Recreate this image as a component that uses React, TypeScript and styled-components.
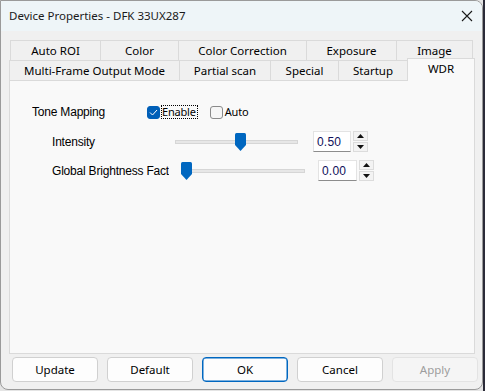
import React from "react";
import styled, { createGlobalStyle } from "styled-components";

const GlobalStyle = createGlobalStyle`
  html, body { margin: 0; padding: 0; }
  body {
    width: 485px; height: 391px; overflow: hidden;
    background: linear-gradient(to right, #e4e4e4 483px, #2b2b38 483px);
  }
`;

const UI = `"Noto Sans", "Open Sans", sans-serif`;
const GOTHIC = `"Liberation Sans", Arial, sans-serif`;

const Window = styled.div`
  box-sizing: border-box;
  width: 483px;
  height: 390px;
  border: 1px solid #9a9a9a;
  border-radius: 0 8px 8px 8px;
  background: #f0f0f0;
  overflow: hidden;
  display: flex;
  flex-direction: column;
  font-family: ${UI};
  font-size: 11px;
  color: #000;
`;

const TitleBar = styled.div`
  height: 30px;
  flex: none;
  background: #eef5f8;
  display: flex;
  align-items: center;
  justify-content: space-between;
  padding: 0 8px 0 8px;
`;

const Title = styled.span`
  font-size: 11.5px;
  color: #1a1a1a;
  padding-bottom: 2px;
`;

const Close = styled.div`
  width: 12px;
  height: 12px;
  display: flex;
  margin-right: 1px;
  margin-bottom: 1px;
`;

const Body = styled.div`
  flex: 1;
  display: flex;
  flex-direction: column;
  padding: 9px 0 0 8px;
`;

const TabRow = styled.div<{ $inset: number }>`
  display: flex;
  height: 20px;
  padding-left: ${(p) => p.$inset}px;
`;

const Tab = styled.div<{ $w: number; $active?: boolean }>`
  box-sizing: border-box;
  flex: none;
  width: ${(p) => p.$w}px;
  height: ${(p) => (p.$active ? 23 : 20)}px;
  margin-top: ${(p) => (p.$active ? -2 : 0)}px;
  margin-right: -1px;
  border: 1px solid #dadada;
  border-bottom: none;
  background: ${(p) => (p.$active ? "#f9f9f9" : "#f0f0f0")};
  position: relative;
  z-index: ${(p) => (p.$active ? 2 : 1)};
  display: flex;
  align-items: center;
  justify-content: center;
  padding-bottom: ${(p) => (p.$active ? 4 : 1)}px;
  font-size: 11.5px;
  white-space: nowrap;
`;

const Panel = styled.div`
  box-sizing: border-box;
  flex: none;
  width: 466px;
  height: 274px;
  border: 1px solid #dadada;
  background: #f9f9f9;
  display: flex;
  flex-direction: column;
  font-family: ${GOTHIC};
  font-size: 12px;
`;

const Row = styled.div<{ $top: number; $indent: number; $h: number }>`
  display: flex;
  align-items: center;
  height: ${(p) => p.$h}px;
  margin-top: ${(p) => p.$top}px;
  padding-left: ${(p) => p.$indent}px;
`;

const Label = styled.div<{ $w: number; $gap?: number }>`
  width: ${(p) => p.$w}px;
  margin-right: ${(p) => p.$gap ?? 0}px;
  flex: none;
  white-space: nowrap;
  overflow: hidden;
  letter-spacing: -0.2px;
`;

const Check = styled.div<{ $on?: boolean }>`
  box-sizing: border-box;
  width: 13px;
  height: 13px;
  border-radius: 3px;
  flex: none;
  background: ${(p) => (p.$on ? "#005fb8" : "#f6f6f6")};
  border: 1px solid ${(p) => (p.$on ? "#005fb8" : "#8a8a8a")};
  display: flex;
  align-items: center;
  justify-content: center;
`;

const CheckText = styled.span<{ $focus?: boolean }>`
  font-family: ${UI};
  font-size: 11px;
  letter-spacing: -0.2px;
  margin-left: 2px;
  padding: 0 1px 0 0;
  line-height: 12px;
  outline: ${(p) => (p.$focus ? "1px dotted #000" : "none")};
  outline-offset: 0px;
  margin-right: ${(p) => (p.$focus ? 13 : 0)}px;
`;

const Slider = styled.div<{ $w: number }>`
  position: relative;
  width: ${(p) => p.$w}px;
  height: 18px;
  flex: none;
  display: flex;
  align-items: center;
`;

const Track = styled.div`
  box-sizing: border-box;
  width: 100%;
  height: 4px;
  background: #e7e7e7;
  border: 1px solid #d6d6d6;
`;

const Thumb = styled.svg`
  position: absolute;
  top: 0;
`;

const Edit = styled.div<{ $w: number; $gap: number }>`
  box-sizing: border-box;
  flex: none;
  width: ${(p) => p.$w}px;
  height: 21px;
  margin-left: ${(p) => p.$gap}px;
  background: #fff;
  border: 1px solid #e3e3e3;
  border-bottom: 1px solid #8c8c8c;
  display: flex;
  align-items: center;
  padding-left: 3px;
  color: #10105a;
  font-size: 12px;
  letter-spacing: 0.2px;
`;

const Spin = styled.div`
  flex: none;
  width: 15px;
  height: 21px;
  margin-left: 2px;
  display: flex;
  flex-direction: column;
  gap: 1px;
`;

const SpinBtn = styled.div`
  box-sizing: border-box;
  flex: 1;
  background: #f3f3f3;
  border: 1px solid #dcdcdc;
  display: flex;
  align-items: center;
  justify-content: center;
`;

const ButtonBar = styled.div`
  display: flex;
  gap: 9px;
  padding-left: 3px;
  margin-top: 3px;
`;

const Button = styled.div<{ $variant?: "default" | "disabled" }>`
  box-sizing: border-box;
  flex: none;
  width: 86px;
  height: 25px;
  border-radius: 4px;
  display: flex;
  align-items: center;
  justify-content: center;
  font-size: 11.5px;
  padding-bottom: 1px;
  background: ${(p) => (p.$variant === "disabled" ? "#f5f5f5" : "#fdfdfd")};
  border: 1px solid
    ${(p) =>
      p.$variant === "default" ? "#0067c0" : p.$variant === "disabled" ? "#e3e3e3" : "#d0d0d0"};
  box-shadow: ${(p) => (p.$variant === "default" ? "inset 0 0 0 0.5px #0067c0" : "none")};
  color: ${(p) => (p.$variant === "disabled" ? "#9d9d9d" : "#000")};
`;

const ThumbShape = ({ left }: { left: number }) => (
  <Thumb width="11" height="18" viewBox="0 0 11 18" style={{ left }}>
    <path d="M1.5 0 H9.5 Q11 0 11 1.5 V12 L5.5 18 L0 12 V1.5 Q0 0 1.5 0 Z" fill="#0067c0" />
  </Thumb>
);

const Arrow = ({ up }: { up?: boolean }) => (
  <svg width="7" height="4" viewBox="0 0 7 4">
    <path d={up ? "M0 4 L3.5 0 L7 4 Z" : "M0 0 L7 0 L3.5 4 Z"} fill="#111" />
  </svg>
);

const row1 = [
  ["Auto ROI", 91],
  ["Color", 79],
  ["Color Correction", 129],
  ["Exposure", 91],
  ["Image", 77],
] as const;

const row2 = [
  ["Multi-Frame Output Mode", 171],
  ["Partial scan", 92],
  ["Special", 69],
  ["Startup", 70],
  ["WDR", 68],
] as const;

export default function App() {
  return (
    <>
      <GlobalStyle />
      <Window>
        <TitleBar>
          <Title>Device Properties - DFK 33UX287</Title>
          <Close>
            <svg width="12" height="12" viewBox="0 0 12 12">
              <path d="M1 1 L11 11 M11 1 L1 11" stroke="#1a1a1a" strokeWidth="1.1" />
            </svg>
          </Close>
        </TitleBar>
        <Body>
          <TabRow $inset={1}>
            {row1.map(([t, w]) => (
              <Tab key={t} $w={w}>
                {t}
              </Tab>
            ))}
          </TabRow>
          <TabRow $inset={0}>
            {row2.map(([t, w]) => (
              <Tab key={t} $w={w} $active={t === "WDR"}>
                {t}
              </Tab>
            ))}
          </TabRow>
          <Panel>
            <Row $top={23} $indent={22} $h={16}>
              <Label $w={115}>Tone Mapping</Label>
              <Check $on>
                <svg width="9" height="7" viewBox="0 0 9 7">
                  <path d="M1 3.5 L3.5 6 L8 1" stroke="#fff" strokeWidth="1" fill="none" />
                </svg>
              </Check>
              <CheckText $focus>Enable</CheckText>
              <Check />
              <CheckText>Auto</CheckText>
            </Row>
            <Row $top={11} $indent={42} $h={21}>
              <Label $w={123}>Intensity</Label>
              <Slider $w={123}>
                <Track />
                <ThumbShape left={60} />
              </Slider>
              <Edit $w={38} $gap={15}>0.50</Edit>
              <Spin>
                <SpinBtn>
                  <Arrow up />
                </SpinBtn>
                <SpinBtn>
                  <Arrow />
                </SpinBtn>
              </Spin>
            </Row>
            <Row $top={8} $indent={42} $h={21}>
              <Label $w={117} $gap={12}>Global Brightness Factor</Label>
              <Slider $w={124}>
                <Track />
                <ThumbShape left={0} />
              </Slider>
              <Edit $w={39} $gap={13}>0.00</Edit>
              <Spin>
                <SpinBtn>
                  <Arrow up />
                </SpinBtn>
                <SpinBtn>
                  <Arrow />
                </SpinBtn>
              </Spin>
            </Row>
          </Panel>
          <ButtonBar>
            <Button>Update</Button>
            <Button>Default</Button>
            <Button $variant="default">OK</Button>
            <Button>Cancel</Button>
            <Button $variant="disabled">Apply</Button>
          </ButtonBar>
        </Body>
      </Window>
    </>
  );
}
